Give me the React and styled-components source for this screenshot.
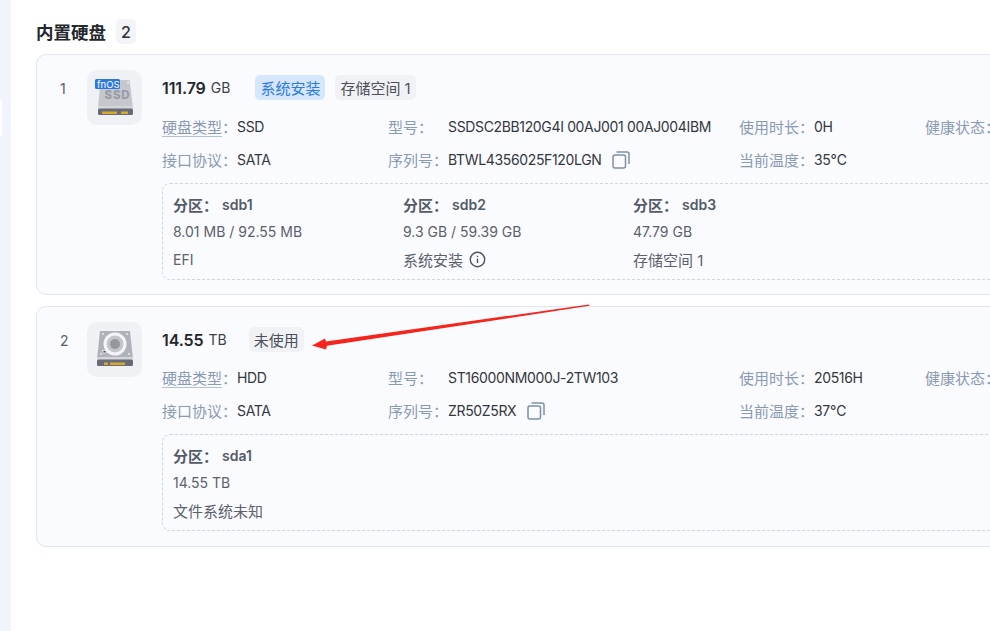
import React from 'react'
import styled, { createGlobalStyle } from 'styled-components'

const Global = createGlobalStyle`
  html, body { margin: 0; padding: 0; background: #fff; }
  body { font-family: Inter, "Noto Sans CJK SC", sans-serif; overflow: hidden; }
`

const Page = styled.div`
  position: relative;
  display: flex;
  width: 990px;
  height: 631px;
  overflow: hidden;
`

const SideStrip = styled.div`
  position: relative;
  flex: 0 0 11px;
  background: #f1f4fa;
  &::after {
    content: '';
    position: absolute;
    left: 0;
    top: 100px;
    width: 2px;
    height: 36px;
    background: #fff;
  }
`

const Main = styled.main`
  flex: 0 0 1100px;
  padding: 19px 0 0 25px;
  box-sizing: border-box;
`

const Heading = styled.div`
  display: flex;
  align-items: center;
  gap: 10px;
  height: 25px;
  margin-bottom: 10px;
`

const Title = styled.h2`
  margin: 0;
  font-size: 17.5px;
  font-weight: 700;
  color: #24272c;
`

const Count = styled.span`
  display: flex;
  align-items: center;
  justify-content: center;
  width: 20px;
  height: 25px;
  border-radius: 5px;
  background: #f3f4f7;
  color: #2c3036;
  font-size: 16px;
  font-weight: 500;
`

const InfoGrid = styled.div`
  display: grid;
  grid-template-columns: 226px 351px 186px 1fr;
  grid-auto-rows: 33px;
  margin-top: 10px;
  align-items: center;
  font-size: 14px;
`

const Card = styled.section`
  display: flex;
  height: 241px;
  box-sizing: border-box;
  margin-bottom: 11px;
  padding: 15px 0 0 0;
  border: 1px solid #e0e6ef;
  border-radius: 10px;
  background: #fafbfe;

  & + & ${InfoGrid} {
    margin-top: 9px;
  }
`

const Index = styled.div`
  flex: 0 0 50px;
  padding: 11px 0 0 23px;
  box-sizing: border-box;
  font-size: 14px;
  line-height: 16px;
  color: #59606d;
`

const IconTile = styled.div`
  flex: 0 0 55px;
  height: 55px;
  border-radius: 10px;
  background: #f0f1f4;
`

const Body = styled.div`
  flex: 1;
  margin-left: 20px;
`

const HeadRow = styled.div`
  display: flex;
  align-items: center;
  height: 25px;
  margin-top: 5px;
`

const Size = styled.span`
  font-size: 16px;
  font-weight: 600;
  color: #24272c;
  letter-spacing: -0.1px;
`

const Unit = styled.span`
  margin-left: 5px;
  font-size: 14px;
  color: #3c4149;
`

const Tag = styled.span`
  display: flex;
  align-items: center;
  height: 25px;
  padding: 0 5px;
  margin-left: ${(p) => p.$gap}px;
  border-radius: 5px;
  font-size: 15px;
  background: ${(p) => (p.$blue ? '#d6e6fb' : '#f1f2f5')};
  color: ${(p) => (p.$blue ? '#2b7be6' : '#4b5059')};
`

const Info = styled.div`
  display: flex;
  align-items: center;
  white-space: nowrap;
`

const Label = styled.span`
  flex: 0 0 ${(p) => p.$w}px;
  font-size: 15px;
  color: #8a9ab3;
`

const HintText = styled.span`
  text-decoration: underline;
  text-decoration-color: #b4c0d0;
  text-underline-offset: 3px;
`

const Value = styled.span`
  color: #33373d;
  letter-spacing: -0.35px;
`

const CopyButton = styled.span`
  display: flex;
  margin-left: 11px;
  color: #7f8fa8;
`

const PartitionBox = styled.div`
  display: grid;
  grid-template-columns: repeat(3, 230px);
  height: 97px;
  box-sizing: border-box;
  margin-top: 7px;
  padding: 8px 0 0 10px;
  border: 1px dashed #cdd6e2;
  border-radius: 8px;
`

const PartName = styled.div`
  display: flex;
  gap: 4px;
  height: 25px;
  align-items: center;
  font-size: 14px;
  font-weight: 600;
  color: #535a68;
`

const PartKey = styled.span`
  font-size: 15px;
`

const PartLine = styled.div`
  display: flex;
  align-items: center;
  gap: 6px;
  height: 28px;
  font-size: ${(p) => (p.$cjk ? 15 : 14)}px;
  color: #5b616c;
`

const Arrow = styled.svg`
  position: absolute;
  left: 0;
  top: 0;
  pointer-events: none;
`

const InfoCircle = () => (
  <svg width="17" height="17" viewBox="0 0 16 16" fill="none" stroke="#4d5461" strokeWidth="1.3">
    <circle cx="8" cy="8" r="6.8" />
    <path d="M8 7v4.2M8 4.4v1.3" />
  </svg>
)

const CopyIcon = () => (
  <svg width="18" height="18" viewBox="0 0 18 18" fill="none" stroke="currentColor" strokeWidth="1.5">
    <rect x="1" y="4" width="12.5" height="13" rx="2" />
    <path d="M4.5 1h10.5a2 2 0 0 1 2 2v10" />
  </svg>
)

const SsdIcon = () => (
  <svg width="55" height="55" viewBox="0 0 55 55">
    <path d="M13.500 10h29l3.500 28H11z" fill="#c5c7cd" />
    <circle cx="41" cy="12.500" r="1" fill="#eceef1" />
    <text x="17.500" y="29" fontFamily="Inter, sans-serif" fontSize="11.500" fontWeight="800" fill="#9a9da5" letterSpacing="0.8">SSD</text>
    <rect x="11" y="36" width="35" height="3" fill="#d3d5da" />
    <rect x="11" y="38.500" width="35" height="6.500" rx="1.500" fill="#666b77" />
    <rect x="15" y="41.500" width="15" height="2.500" fill="#d7a92f" />
    <rect x="34" y="41.500" width="7" height="2.500" fill="#d7a92f" />
    <rect x="8" y="9" width="25" height="10" rx="1.500" fill="#2d78e0" />
    <text x="10" y="17.500" fontFamily="Inter, sans-serif" fontSize="9.500" fill="#fff">fnOS</text>
  </svg>
)

const HddIcon = () => (
  <svg width="55" height="55" viewBox="0 0 55 55">
    <path d="M13 9h30l3 28H10z" fill="#b0b2ba" />
    <circle cx="16" cy="12" r="1" fill="#e6e7ea" />
    <circle cx="40" cy="12" r="1" fill="#e6e7ea" />
    <circle cx="14" cy="32" r="1" fill="#e6e7ea" />
    <circle cx="42" cy="32" r="1" fill="#e6e7ea" />
    <circle cx="28" cy="22" r="10" fill="#c3c5cb" stroke="#f5f5f7" strokeWidth="3" />
    <circle cx="28" cy="22" r="5" fill="#95979f" />
    <rect x="16" y="28.500" width="3" height="2.500" fill="#4c4f58" stroke="#f5f5f7" strokeWidth="0.8" />
    <rect x="10" y="35" width="36" height="3" fill="#d3d5da" />
    <rect x="10" y="37.500" width="36" height="6.500" rx="1.500" fill="#666b77" />
    <rect x="17" y="40.500" width="4" height="2.500" fill="#d7a92f" />
    <rect x="23" y="40.500" width="15" height="2.500" fill="#d7a92f" />
  </svg>
)

const disks = [
  {
    no: 1,
    icon: <SsdIcon />,
    size: '111.79',
    unit: 'GB',
    tags: [
      { text: '系统安装', blue: true, gap: 25 },
      { text: '存储空间 1', gap: 10 },
    ],
    type: 'SSD',
    model: 'SSDSC2BB120G4I 00AJ001 00AJ004IBM',
    serial: 'BTWL4356025F120LGN',
    hours: '0H',
    temp: '35℃',
    parts: [
      { name: 'sdb1', usage: '8.01 MB / 92.55 MB', fs: 'EFI' },
      { name: 'sdb2', usage: '9.3 GB / 59.39 GB', fs: '系统安装', cjk: true, info: true },
      { name: 'sdb3', usage: '47.79 GB', fs: '存储空间 1', cjk: true },
    ],
  },
  {
    no: 2,
    icon: <HddIcon />,
    size: '14.55',
    unit: 'TB',
    tags: [{ text: '未使用', gap: 22 }],
    type: 'HDD',
    model: 'ST16000NM000J-2TW103',
    serial: 'ZR50Z5RX',
    hours: '20516H',
    temp: '37℃',
    parts: [{ name: 'sda1', usage: '14.55 TB', fs: '文件系统未知', cjk: true }],
  },
]

const App = () => {
  return (
    <Page>
      <Global />
      <SideStrip />
      <Main>
        <Heading>
          <Title>内置硬盘</Title>
          <Count>2</Count>
        </Heading>
        {disks.map((d) => (
          <Card key={d.no}>
            <Index>{d.no}</Index>
            <IconTile>{d.icon}</IconTile>
            <Body>
              <HeadRow>
                <Size>{d.size}</Size>
                <Unit>{d.unit}</Unit>
                {d.tags.map((t) => (
                  <Tag key={t.text} $blue={t.blue} $gap={t.gap}>{t.text}</Tag>
                ))}
              </HeadRow>
              <InfoGrid>
                <Info><Label $w={75}><HintText>硬盘类型</HintText>：</Label><Value>{d.type}</Value></Info>
                <Info><Label $w={60}>型号：</Label><Value>{d.model}</Value></Info>
                <Info><Label $w={73}>使用时长：</Label><Value>{d.hours}</Value></Info>
                <Info><Label $w={75}>健康状态：</Label></Info>
                <Info><Label $w={75}>接口协议：</Label><Value>SATA</Value></Info>
                <Info>
                  <Label $w={60}>序列号：</Label><Value>{d.serial}</Value>
                  <CopyButton><CopyIcon /></CopyButton>
                </Info>
                <Info><Label $w={73}>当前温度：</Label><Value>{d.temp}</Value></Info>
              </InfoGrid>
              <PartitionBox>
                {d.parts.map((p) => (
                  <div key={p.name}>
                    <PartName><PartKey>分区：</PartKey><span>{p.name}</span></PartName>
                    <PartLine>{p.usage}</PartLine>
                    <PartLine $cjk={p.cjk}>{p.fs}{p.info && <InfoCircle />}</PartLine>
                  </div>
                ))}
              </PartitionBox>
            </Body>
          </Card>
        ))}
      </Main>
      <Arrow width="990" height="631" viewBox="0 0 990 631">
        <path d="M589 304.500 L589.500 305.800 L327 345.800 L326 349.500 L312 345.500 L325 338.500 L326 341.500 Z" fill="#f5251c" />
      </Arrow>
    </Page>
  )
}

export default App
